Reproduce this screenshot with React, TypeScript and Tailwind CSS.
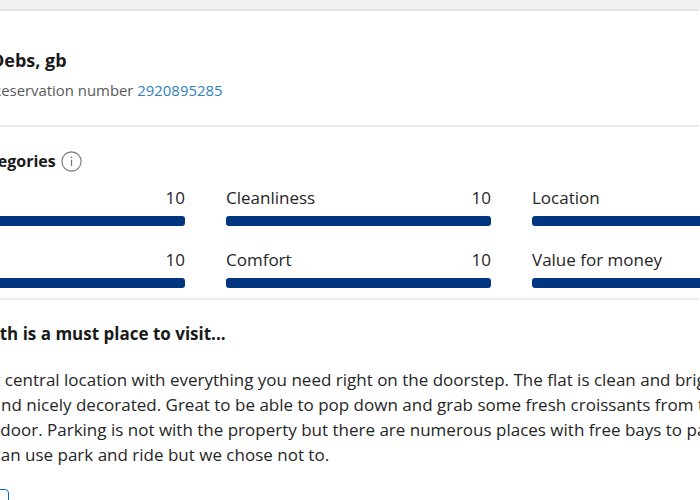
import React from "react";

const rows = [
  [
    { label: "Staff", value: "10" },
    { label: "Cleanliness", value: "10" },
    { label: "Location", value: "10" },
  ],
  [
    { label: "Facilities", value: "10" },
    { label: "Comfort", value: "10" },
    { label: "Value for money", value: "10" },
  ],
];

const lines = [
  { text: "Great central location with everything you need right on the doorstep. The flat is clean and bright,", cls: "-ml-[2px]" },
  { text: "airy and nicely decorated. Great to be able to pop down and grab some fresh croissants from the bakery", cls: "" },
  { text: "next door. Parking is not with the property but there are numerous places with free bays to park.", cls: "ml-[3px]" },
  { text: "You can use park and ride but we chose not to.", cls: "" },
];

function InfoIcon() {
  return (
    <svg width="21" height="21" viewBox="0 0 21 21" className="shrink-0">
      <circle cx="10.5" cy="10.5" r="9.6" fill="none" stroke="#757575" strokeWidth="1.1" />
      <circle cx="10.5" cy="6.3" r="0.9" fill="#757575" />
      <line x1="10.5" y1="8.8" x2="10.5" y2="15" stroke="#757575" strokeWidth="1.2" />
    </svg>
  );
}

export default function App() {
  return (
    <div className="w-[700px] h-[500px] overflow-hidden bg-white font-['Open_Sans',sans-serif] text-[#262626]">
      <div className="h-[9px] bg-[#f1f1f1]" />
      <div className="h-[2px] w-[699px] bg-[#e4e4e4]" />

      <div className="h-[114px] pt-[37px]">
        <div className="-ml-[9px] text-[18px] leading-[24px] font-bold text-[#1a1a1a] whitespace-nowrap">Debs, gb</div>
        <div className="-ml-[8px] mt-[8px] text-[14.9px] leading-[20px] text-[#595959] whitespace-nowrap">
          Reservation number <span className="text-[#2f80ba]">2920895285</span>
        </div>
      </div>
      <div className="h-[2px] w-[699px] bg-[#ececec]" />

      <div className="pt-[22px] pb-[10px]">
        <div className="flex items-center gap-[5px] -ml-[29px] h-[24px]">
          <span className="text-[16px] leading-[24px] font-bold text-[#1a1a1a]">Categories</span>
          <InfoIcon />
        </div>
        <div className="mt-[13px] -ml-[80px] w-[900px] flex flex-col gap-[22px]">
          {rows.map((row, i) => (
            <div key={i} className="grid grid-cols-[265px_265px_265px] gap-x-[41px]">
              {row.map((c) => (
                <div key={c.label}>
                  <div className="flex justify-between text-[17px] leading-[24px] text-[#262626]">
                    <span>{c.label}</span>
                    <span>{c.value}</span>
                  </div>
                  <div className="mt-[6px] h-[10px] rounded-[3px] bg-[#003580]" />
                </div>
              ))}
            </div>
          ))}
        </div>
      </div>
      <div className="h-[2px] w-[699px] bg-[#ececec]" />

      <div className="pt-[22px] -ml-[42px] w-[900px]">
        <div className="ml-[20px] text-[17px] leading-[24px] font-bold text-[#1a1a1a] whitespace-nowrap">
          Bath is a must place to visit...
        </div>
        <div className="mt-[21px] text-[17px] leading-[25px] text-[#262626]">
          {lines.map((l) => (
            <div key={l.text} className={`whitespace-nowrap ${l.cls}`}>{l.text}</div>
          ))}
        </div>
        <div className="mt-[22px] w-[51px] h-[36px] border border-[#0071c2] rounded-[4px]" />
      </div>
    </div>
  );
}
